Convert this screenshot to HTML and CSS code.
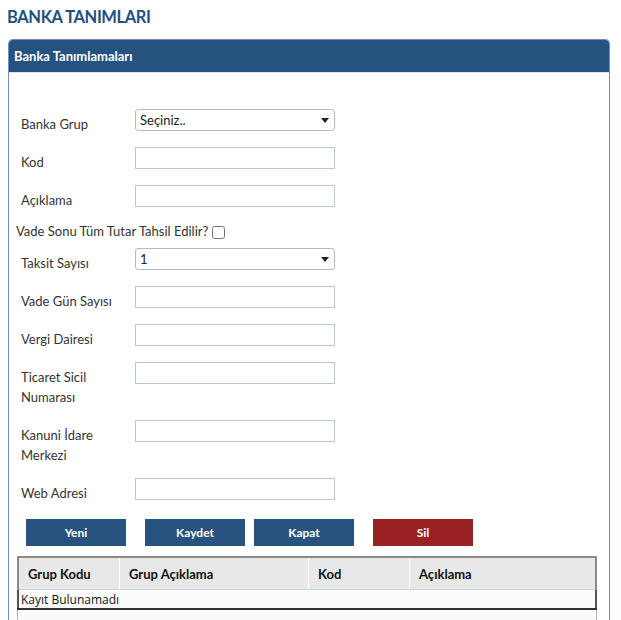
FILE: index.html
```html
<!DOCTYPE html>
<html lang="tr">
<head>
<meta charset="UTF-8">
<meta name="viewport" content="width=device-width, initial-scale=1.0">
<title>Banka Tanımları</title>
<link rel="stylesheet" href="styles.css">
</head>
<body>
<h1 class="page-title">BANKA TANIMLARI</h1>
<div class="panel">
<div class="panel-heading">Banka Tanımlamaları</div>
<div class="panel-body">
<div class="form-row">
<label for="banka-grup">Banka Grup</label>
<div class="select-wrap">
<select id="banka-grup">
<option>Seçiniz..</option>
</select>
</div>
</div>
<div class="form-row">
<label for="kod">Kod</label>
<input type="text" id="kod">
</div>
<div class="form-row">
<label for="aciklama">Açıklama</label>
<input type="text" id="aciklama">
</div>
<div class="check-row">
<label for="vade-sonu">Vade Sonu Tüm Tutar Tahsil Edilir?</label>
<input type="checkbox" id="vade-sonu">
</div>
<div class="form-row">
<label for="taksit">Taksit Sayısı</label>
<div class="select-wrap">
<select id="taksit">
<option>1</option>
<option>2</option>
<option>3</option>
</select>
</div>
</div>
<div class="form-row">
<label for="vade-gun">Vade Gün Sayısı</label>
<input type="text" id="vade-gun">
</div>
<div class="form-row">
<label for="vergi">Vergi Dairesi</label>
<input type="text" id="vergi">
</div>
<div class="form-row">
<label for="ticaret">Ticaret Sicil Numarası</label>
<input type="text" id="ticaret">
</div>
<div class="form-row">
<label for="kanuni">Kanuni İdare Merkezi</label>
<input type="text" id="kanuni">
</div>
<div class="form-row">
<label for="web">Web Adresi</label>
<input type="text" id="web">
</div>
<div class="button-row">
<button class="button btn-yeni">Yeni</button>
<button class="button btn-kaydet">Kaydet</button>
<button class="button btn-kapat">Kapat</button>
<button class="button button-danger btn-sil">Sil</button>
</div>
<div class="grid-wrap">
<table class="grid">
<thead>
<tr>
<th class="col-grupkod">Grup Kodu</th>
<th class="col-grupaciklama">Grup Açıklama</th>
<th class="col-kod">Kod</th>
<th>Açıklama</th>
</tr>
</thead>
<tbody>
<tr>
<td colspan="4">Kayıt Bulunamadı</td>
</tr>
</tbody>
</table>
</div>
</div>
</div>
</body>
</html>
```

FILE: styles.css
```css
body {
font-family: Lato, 'Open Sans', sans-serif;
margin: 0;
padding: 0 11px 0 8px;
color: #333;
background-color: #fff;
font-size: 13px;
}
.page-title {
margin: 0;
padding: 7px 0 0 0;
margin-left: -1px;
height: 39px;
box-sizing: border-box;
font-size: 16.5px;
letter-spacing: -0.4px;
font-weight: bold;
color: #24507f;
line-height: 20px;
}
.panel {
border: 1px solid #6d8fc2;
border-bottom: none;
border-radius: 5px 5px 0 0;
}
.panel-heading {
background-color: #26527f;
color: #fff;
font-weight: bold;
font-size: 13px;
height: 32px;
line-height: 32px;
padding-left: 5px;
border-radius: 4px 4px 0 0;
border-bottom: 1px solid #dde3ea;
}
.panel-body {
padding: 36px 12px 0 12px;
display: flex;
flex-direction: column;
gap: 13px;
}
.form-row {
display: flex;
align-items: flex-start;
}
.form-row label {
width: 114px;
margin-top: 5px;
line-height: 20px;
padding-right: 20px;
box-sizing: border-box;
color: #333;
}
.form-row input {
width: 200px;
height: 22px;
box-sizing: border-box;
border: 1px solid #b3c7e0;
margin: 0;
padding: 2px 5px;
font-family: inherit;
}
.select-wrap {
position: relative;
width: 200px;
}
.select-wrap select {
appearance: none;
width: 200px;
height: 22px;
box-sizing: border-box;
border: 1px solid #a9bddb;
border-radius: 3px;
background-color: #fff;
padding: 0 4px;
font-family: inherit;
font-size: 13px;
color: #222;
}
.select-wrap::after {
content: "";
position: absolute;
right: 6px;
top: 9px;
border-left: 4px solid transparent;
border-right: 4px solid transparent;
border-top: 5px solid #222;
}
.check-row {
margin-left: -5px;
height: 16px;
line-height: 20px;
display: flex;
align-items: center;
gap: 4px;
margin-bottom: -4px;
}
.check-row input {
margin: 2px 0 0 0;
width: 13px;
height: 13px;
}
.button-row {
display: flex;
padding-left: 5px;
margin-top: 3px;
}
.button {
width: 100px;
height: 27px;
border: none;
background-color: #28527f;
color: #fff;
font-family: inherit;
font-weight: bold;
font-size: 12px;
cursor: pointer;
}
.button-danger {
background-color: #9a2123;
}
.btn-kaydet {
margin-left: 19px;
}
.btn-kapat {
margin-left: 9px;
}
.btn-sil {
margin-left: 19px;
}
.grid-wrap {
margin-top: -3px;
margin-left: -4px;
width: 580px;
height: 80px;
box-sizing: border-box;
border: 1px solid #b8b8b8;
border-top: none;
background-color: #fafafa;
}
.grid {
width: 580px;
border-collapse: collapse;
margin-left: -1px;
}
.grid th {
background-color: #e8e8e8;
border-top: 2px solid #8a8a8a;
border-left: 1px solid #fff;
border-right: 1px solid #fff;
border-bottom: 1px solid #c6d3e4;
height: 31px;
padding: 0 9px;
text-align: left;
font-weight: bold;
font-size: 13px;
color: #111;
}
.grid th:first-child {
border-left: 2px solid #8a8a8a;
}
.grid th:last-child {
border-right: 2px solid #8a8a8a;
}
.grid td {
background-color: #fcfcfc;
height: 18px;
padding: 0 2px;
font-size: 12px;
color: #111;
border-left: 2px solid #555;
border-right: 2px solid #555;
border-bottom: 2px solid #333;
font-family: 'Open Sans', sans-serif;
}
.col-grupkod {
width: 82px;
}
.col-grupaciklama {
width: 170px;
}
.col-kod {
width: 82px;
}
```
